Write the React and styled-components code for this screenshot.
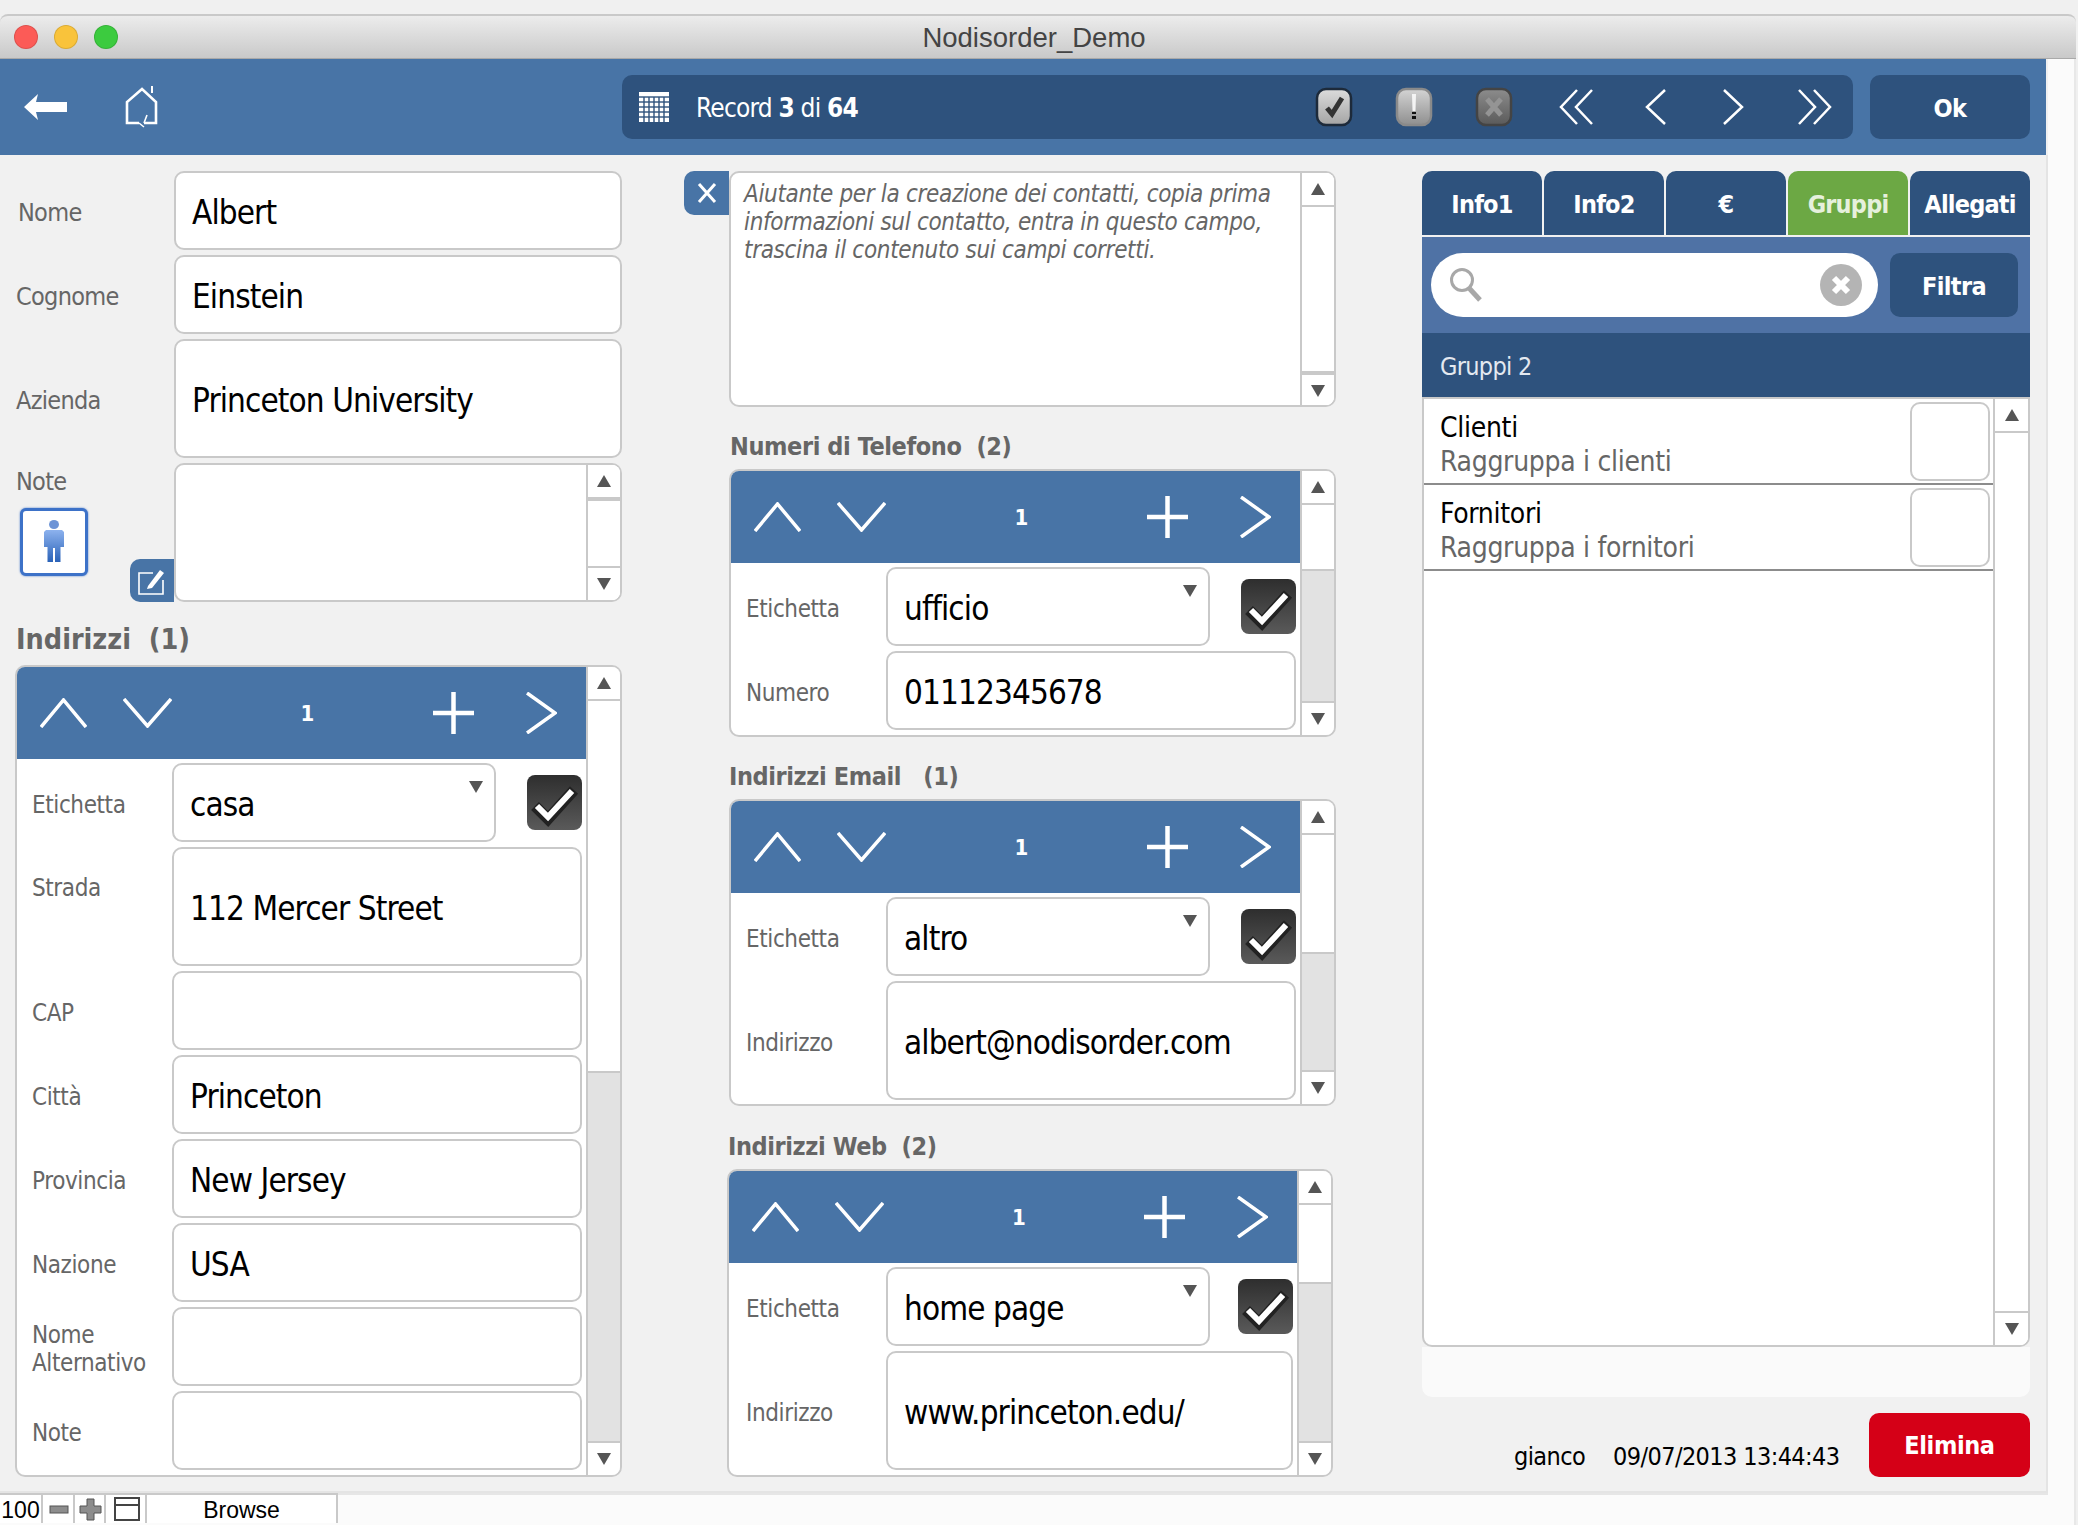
import React from 'react'
import styled, { createGlobalStyle } from 'styled-components'

const uiFont = `"DejaVu Sans Condensed", "DejaVu Sans", sans-serif`

const GlobalStyle = createGlobalStyle`
  html, body { margin: 0; padding: 0; background: #f0f0f0; }
  * { box-sizing: border-box; }
  body { font-family: ${uiFont}; }
`

const Page = styled.div`
  width: 2078px;
  height: 1525px;
  padding-top: 14px;
  overflow: hidden;
  background: #f0f0f0;
`

// ----- window chrome
const TitleBar = styled.header`
  width: 2076px;
  height: 45px;
  display: flex;
  align-items: center;
  justify-content: center;
  position: relative;
  border-top: 2px solid #c9c9c9;
  border-bottom: 1px solid #a9a9a9;
  border-radius: 8px 8px 0 0;
  background: linear-gradient(#ececec, #c9c9c9);
  font: 27.5px "Liberation Sans", sans-serif;
  color: #444;
  padding: 1px 8px 0 0;
`

const Lights = styled.div`
  position: absolute;
  left: 14px;
  top: 9px;
  display: flex;
  gap: 16px;
`

const Light = styled.span`
  width: 24px;
  height: 24px;
  border-radius: 50%;
  background: ${p => p.$color};
  border: 1px solid rgba(0, 0, 0, .12);
`

const WindowBody = styled.div`
  display: flex;
  width: 2076px;
  height: 1466px;
  background: #fbfbfb;
  border-right: 2px solid #e8e8e8;
`

const Content = styled.div`
  width: 2048px;
  flex-shrink: 0;
`

const Toolbar = styled.div`
  height: 96px;
  background: #4874a6;
  border-right: 2px solid #f1f1f1;
  display: flex;
  align-items: flex-start;
  padding: 16px 0 0 24px;
`

const ToolIcons = styled.div`
  width: 598px;
  height: 64px;
  display: flex;
  align-items: center;
  gap: 57px;
  color: #fff;
`

const RecordBar = styled.div`
  width: 1231px;
  height: 64px;
  border-radius: 10px;
  background: #2e527d;
  display: flex;
  align-items: center;
  padding-left: 17px;
  color: #fff;
  font-size: 26px;
  letter-spacing: -0.8px;
  b { font-weight: 700; }
`

const RecordText = styled.div`
  margin-left: 27px;
  padding-top: 2px;
  flex: 1;
`

const NavGroup = styled.div`
  display: flex;
  align-items: center;
`

const NavSlot = styled.span`
  display: flex;
  justify-content: center;
  width: ${p => p.$w}px;
`

const NavSpacer = styled.span`
  width: 3px;
`

const Gloss = styled.svg`
  filter: blur(0.7px);
`

const DarkButton = styled.div`
  border-radius: 10px;
  background: #2e527d;
  color: #fff;
  font-weight: 700;
  display: flex;
  align-items: center;
  justify-content: center;
  font-size: 25px;
  letter-spacing: -0.6px;
  padding-top: 2px;
  width: ${p => p.$w}px;
  height: 64px;
  flex-shrink: 0;
`

const OkButton = styled(DarkButton)`
  margin-left: 17px;
`

const Main = styled.main`
  height: 1338px;
  display: flex;
  background: #f1f1f1;
  border-right: 2px solid #e4e4e4;
  border-bottom: 2px solid #e4e4e4;
  padding: 16px 15px 0 15px;
`

// ----- form parts
const LeftColumn = styled.section`
  width: 607px;
  flex-shrink: 0;
`

const MiddleColumn = styled.section`
  width: 652px;
  margin-left: 62px;
  flex-shrink: 0;
`

const RightColumn = styled.section`
  width: 608px;
  margin-left: 86px;
  flex-shrink: 0;
`

const FieldStack = styled.div`
  display: flex;
  flex-direction: column;
  gap: 5px;
`

const FieldRow = styled.div`
  display: grid;
  grid-template-columns: 159px 1fr;
  align-items: center;
  height: ${p => p.$h}px;
`

const Label = styled.label`
  font-size: 25px;
  line-height: 28px;
  color: #666;
  letter-spacing: -0.7px;
  padding-top: 5px;
  padding-left: ${p => p.$pad || 0}px;
`

const Input = styled.div`
  height: ${p => p.$h || 79}px;
  flex: ${p => p.$w ? 'none' : 1};
  width: ${p => p.$w ? p.$w + 'px' : 'auto'};
  position: relative;
  display: flex;
  align-items: center;
  padding: 3px 0 0 16px;
  background: #fff;
  border: 2px solid #c9c9c9;
  border-radius: 10px;
  color: #000;
  font-size: 33px;
  letter-spacing: -0.9px;
`

const SelectCaret = styled.i`
  position: absolute;
  right: 11px;
  top: 16px;
  border-left: 7px solid transparent;
  border-right: 7px solid transparent;
  border-top: 12px solid #555;
`

const NoteRow = styled.div`
  display: grid;
  grid-template-columns: 159px 1fr;
  height: 139px;
`

const NoteSide = styled.div`
  display: grid;
  grid-template-columns: 115px 44px;
  grid-template-rows: auto 1fr;
`

const NoteLabel = styled(Label)`
  grid-column: 1 / 3;
  padding: 0 0 0 1px;
  margin-top: 5px;
`

const Photo = styled.div`
  width: 68px;
  height: 68px;
  margin: 12px 0 0 5px;
  background: #fff;
  border: 3px solid #3d72c8;
  border-radius: 6px;
  display: flex;
  align-items: center;
  justify-content: center;
  box-shadow: 0 0 2px #3d72c8;
`

const SideButton = styled.div`
  background: #4874a6;
  border-radius: 10px 0 0 10px;
  display: flex;
  align-items: center;
  justify-content: center;
  color: #fff;
`

const EditButton = styled(SideButton)`
  width: 44px;
  height: 43px;
  align-self: end;
`

const CloseButton = styled(SideButton)`
  width: 45px;
  height: 44px;
  flex-shrink: 0;
`

const Box = styled.div`
  display: flex;
  background: #fff;
  border: 2px solid #c9c9c9;
  border-radius: 10px;
  overflow: hidden;
  flex: 1;
  min-width: 0;
`

const BoxBody = styled.div`
  flex: 1;
  min-width: 0;
`

const HelperRow = styled.div`
  display: flex;
  height: 236px;
`

const HelperText = styled.div`
  flex: 1;
  padding: 7px 10px 0 13px;
  font-size: 24px;
  line-height: 28px;
  font-style: italic;
  color: #666;
  letter-spacing: -0.33px;
`

const SectionTitle = styled.h3`
  margin: ${p => p.$top}px 0 0 ${p => p.$left || 0}px;
  height: ${p => p.$h}px;
  font-size: ${p => p.$size || 25}px;
  line-height: 30px;
  font-weight: 700;
  color: #666;
  white-space: pre;
  letter-spacing: ${p => p.$size ? 0 : -0.4}px;
`

const Panel = styled(Box)`
  margin-left: ${p => p.$left || 0}px;
  width: ${p => p.$w}px;
  height: ${p => p.$h}px;
  flex: none;
`

const PanelHead = styled.div`
  height: 92px;
  background: #4874a6;
  color: #fff;
  display: flex;
  align-items: center;
  padding: 0 29px 0 23px;
`

const HeadGap = styled.span`
  width: ${p => p.$w}px;
`

const PanelCount = styled.span`
  flex: 1;
  text-align: center;
  margin-left: 10px;
  font-size: 22px;
  font-weight: 700;
`

const PanelRows = styled.div`
  display: flex;
  flex-direction: column;
  gap: 5px;
  padding: 4px 4px 0 ${p => p.$inset || 0}px;
`

const PanelRow = styled.div`
  display: flex;
  align-items: ${p => p.$top ? 'flex-start' : 'center'};
`

const PanelLabel = styled(Label)`
  width: 155px;
  flex-shrink: 0;
  padding-left: 15px;
  padding-top: ${p => p.$top ? 27 : 4}px;
  font-size: 24px;
  letter-spacing: -0.4px;
`

const CheckSlot = styled.div`
  margin-left: auto;
  width: 55px;
  height: 55px;
`

// ----- scrollbar
const Scroll = styled.div`
  width: ${p => p.$w || 34}px;
  flex-shrink: 0;
  display: flex;
  flex-direction: column;
  background: ${p => p.$open ? '#fff' : '#e2e2e2'};
  border-left: 2px solid #c9c9c9;
`

const ScrollButton = styled.div`
  height: 34px;
  flex-shrink: 0;
  background: #fff;
  display: flex;
  align-items: center;
  justify-content: center;
  border-${p => p.$down ? 'top' : 'bottom'}: 2px solid #c9c9c9;
  &::after {
    content: '';
    border-left: 7px solid transparent;
    border-right: 7px solid transparent;
    border-${p => p.$down ? 'top' : 'bottom'}: 12px solid #555;
  }
`

const ScrollThumb = styled.div`
  flex-shrink: 0;
  background: #fff;
  height: ${p => p.$h}px;
  border-bottom: 2px solid #c9c9c9;
`

const ScrollTrack = styled.div`
  flex: 1;
`

// ----- right column
const Tabs = styled.div`
  display: flex;
  gap: 2px;
  height: 64px;
`

const Tab = styled.div`
  flex: 1;
  border-radius: 10px 10px 0 0;
  background: ${p => p.$active ? '#6ca844' : '#2e527d'};
  color: ${p => p.$active ? '#e6f0dc' : '#fff'};
  display: flex;
  align-items: center;
  justify-content: center;
  padding-top: 2px;
  font-size: 25px;
  font-weight: 700;
  letter-spacing: -0.8px;
`

const SearchBar = styled.div`
  margin-top: 2px;
  height: 96px;
  background: #4f72a5;
  display: flex;
  align-items: center;
  padding: 0 12px 0 9px;
  gap: 12px;
`

const SearchField = styled.div`
  flex: 1;
  height: 64px;
  border-radius: 32px;
  background: #fff;
  display: flex;
  align-items: center;
  justify-content: space-between;
  padding: 0 16px 0 18px;
`

const GroupBar = styled.div`
  height: 64px;
  background: #2e527d;
  color: #e4e9f0;
  display: flex;
  align-items: center;
  padding: 2px 0 0 18px;
  font-size: 25px;
  letter-spacing: -0.7px;
`

const GroupPanel = styled(Box)`
  flex: none;
  height: 950px;
  border-radius: 0 0 10px 10px;
`

const GroupItem = styled.div`
  height: ${p => p.$h}px;
  display: flex;
  justify-content: space-between;
  padding: 3px 3px 0 16px;
  border-bottom: 2px solid #8c8c8c;
`

const GroupText = styled.div`
  font-size: 28px;
  line-height: 34px;
  padding-top: 9px;
  color: #000;
  letter-spacing: -0.3px;
  span { display: block; color: #666; }
`

const GroupCheck = styled.div`
  width: 80px;
  height: 79px;
  background: #fff;
  border: 2px solid #c9c9c9;
  border-radius: 10px;
`

const PortalFoot = styled.div`
  height: 50px;
  background: #fafafa;
  border-radius: 0 0 10px 10px;
`

const FootRow = styled.div`
  margin-top: 16px;
  display: flex;
  align-items: flex-start;
  color: #000;
  font-size: 25px;
  letter-spacing: -0.6px;
`

const Stamp = styled.span`
  margin-left: ${p => p.$left}px;
  padding-top: 29px;
  line-height: 30px;
`

const DeleteButton = styled.div`
  margin-left: auto;
  width: 161px;
  height: 64px;
  border-radius: 10px;
  background: #d50017;
  color: #fff;
  font-weight: 700;
  font-size: 25px;
  letter-spacing: -0.4px;
  padding-top: 1px;
  display: flex;
  align-items: center;
  justify-content: center;
`

// ----- status bar
const StatusBar = styled.footer`
  height: 30px;
  display: flex;
  border-top: 2px solid #e6e6e6;
`

const StatusLeft = styled.div`
  display: flex;
  width: 338px;
  margin-top: -2px;
  background: #fff;
  border-top: 2px solid #c9c9c9;
  border-right: 2px solid #c9c9c9;
`

const StatusCell = styled.div`
  width: ${p => p.$w}px;
  flex: ${p => p.$w ? 'none' : 1};
  display: flex;
  align-items: center;
  justify-content: center;
  border-right: ${p => p.$w ? '2px solid #c9c9c9' : 'none'};
  padding-left: ${p => p.$icon ? 2 : 0}px;
  padding-top: ${p => p.$icon ? 0 : 2}px;
  font: 23px "Liberation Sans", sans-serif;
  color: #000;
`

// ----- drawings
const Stroke = ({ w, h, d, sw = 3.5 }) => (
  <svg width={w} height={h} viewBox={`0 0 ${w} ${h}`} fill="none" stroke="#fff" strokeWidth={sw}>
    <path d={d} />
  </svg>
)

const BackArrow = () => (
  <svg width="43" height="26" viewBox="0 0 43 26" fill="#fff">
    <path d="M0 13 14 0 12 8H43V18H12L14 26z" />
  </svg>
)

const HomeIcon = () => (
  <svg width="36" height="42" viewBox="0 0 36 42" fill="none" stroke="#fff" strokeWidth="2.6">
    <path d="M15 37H3V16L18 3l14 13v21H20" />
    <path d="M15 37l5 4M23 29l-3 8" strokeWidth="1.6" />
    <path d="M28 0v7" strokeWidth="2" />
  </svg>
)

const GridIcon = () => (
  <svg width="30" height="30" viewBox="0 0 30 30">
    <rect width="30" height="30" fill="#fff" />
    {[5, 10, 15, 20, 25].map(p => (
      <React.Fragment key={p}>
        <path d={`M${p} 5V30`} stroke="#2e527d" strokeWidth="1.4" />
        <path d={`M0 ${p}H30`} stroke="#2e527d" strokeWidth="1.4" />
      </React.Fragment>
    ))}
  </svg>
)

const GlossIcon = ({ id, top, bottom, line, mark }) => (
  <Gloss width="38" height="40" viewBox="0 0 38 40">
    <defs>
      <linearGradient id={id} x1="0" y1="0" x2="0" y2="1">
        <stop offset="0" stopColor={top} />
        <stop offset="1" stopColor={bottom} />
      </linearGradient>
    </defs>
    <rect x="2" y="2" width="34" height="36" rx="9" fill={`url(#${id})`} stroke={line} strokeWidth="2.5" />
    {mark}
  </Gloss>
)

const DarkCheck = () => (
  <svg width="55" height="55" viewBox="0 0 55 55">
    <defs>
      <linearGradient id="darkCheck" x1="0" y1="0" x2="0" y2="1">
        <stop offset="0" stopColor="#2e2e2e" />
        <stop offset="1" stopColor="#5a5a5a" />
      </linearGradient>
    </defs>
    <rect width="55" height="55" rx="8" fill="url(#darkCheck)" />
    <path d="M8 31 21 44 47 15" fill="none" stroke="#222" strokeWidth="11" />
    <path d="M10 31 21 42 45 16" fill="none" stroke="#fff" strokeWidth="6" />
  </svg>
)

const PersonIcon = () => (
  <Gloss width="20" height="44" viewBox="0 0 20 44">
    <defs>
      <linearGradient id="person" x1="0" y1="0" x2="0" y2="1">
        <stop offset="0" stopColor="#8db2ee" />
        <stop offset="1" stopColor="#2a62b8" />
      </linearGradient>
    </defs>
    <ellipse cx="10" cy="4.500" rx="5" ry="4.500" fill="#6d94d6" />
    <path d="M2 10h16l2 2v15h-3.500v15h-5.500V28H9v14H3.500V27H0V12z" fill="url(#person)" />
  </Gloss>
)

const EditIcon = () => (
  <svg width="28" height="28" viewBox="0 0 28 28" fill="none" stroke="#fff" strokeWidth="1.6">
    <path d="M15 6H1v21h24V13" />
    <path d="M10 19 22 3l4 3-12 15-5 1z" fill="#fff" stroke="none" />
  </svg>
)

const SearchIcon = () => (
  <svg width="34" height="36" viewBox="0 0 34 36" fill="none" stroke="#a8a8a8">
    <circle cx="13" cy="13" r="10.500" strokeWidth="3" />
    <path d="M20 21 31 33" strokeWidth="5" />
  </svg>
)

const ClearIcon = () => (
  <svg width="42" height="42" viewBox="0 0 42 42">
    <circle cx="21" cy="21" r="21" fill="#b4b4b4" />
    <path d="M14 14 28 28M28 14 14 28" stroke="#fff" strokeWidth="6" />
  </svg>
)

const MiniIcon = ({ children }) => (
  <svg width="24" height="24" viewBox="0 0 24 24">{children}</svg>
)

const GREY_MARK = { fill: '#8d8d8d', stroke: '#555', strokeWidth: 1 }

const ScrollBar = ({ thumb, w, open, plain }) => (
  <Scroll $w={w} $open={open}>
    <ScrollButton />
    {plain ? <ScrollThumb $h={plain} /> : null}
    {thumb ? <ScrollThumb $h={thumb} /> : null}
    <ScrollTrack />
    <ScrollButton $down />
  </Scroll>
)

const Portal = ({ height, left, thumb, rows, width = 607, inset }) => (
  <Panel $w={width} $h={height} $left={left}>
    <BoxBody>
      <PanelHead>
        <Stroke w={47} h={30} d="M1 29 23.500 2 46 29" />
        <HeadGap $w={36} />
        <Stroke w={49} h={30} d="M1 1 24.500 28 48 1" />
        <PanelCount>1</PanelCount>
        <Stroke w={41} h={42} d="M20.500 0V42M0 21H41" sw={4.5} />
        <HeadGap $w={52} />
        <Stroke w={31} h={42} d="M1 1 29 21 1 41" />
      </PanelHead>
      <PanelRows $inset={inset}>
        {rows.map(row => (
          <PanelRow key={row.id || row.label} $top={row.top}>
            <PanelLabel $top={row.top}>{row.label}</PanelLabel>
            {row.select ? (
              <>
                <Input $h={79} $w={324}>{row.value}<SelectCaret /></Input>
                <CheckSlot><DarkCheck /></CheckSlot>
              </>
            ) : (
              <Input $h={row.h}>{row.value}</Input>
            )}
          </PanelRow>
        ))}
      </PanelRows>
    </BoxBody>
    <ScrollBar thumb={thumb} />
  </Panel>
)

const addressRows = [
  { label: 'Etichetta', value: 'casa', select: true },
  { label: 'Strada', value: '112 Mercer Street', h: 119, top: true },
  { label: 'CAP', value: '' },
  { label: 'Città', value: 'Princeton' },
  { label: 'Provincia', value: 'New Jersey' },
  { label: 'Nazione', value: 'USA' },
  { id: 'alt', label: <>Nome<br />Alternativo</>, value: '' },
  { label: 'Note', value: '' },
]

const phoneRows = [
  { label: 'Etichetta', value: 'ufficio', select: true },
  { label: 'Numero', value: '01112345678' },
]

const emailRows = [
  { label: 'Etichetta', value: 'altro', select: true },
  { label: 'Indirizzo', value: 'albert@nodisorder.com', h: 119 },
]

const webRows = [
  { label: 'Etichetta', value: 'home page', select: true },
  { label: 'Indirizzo', value: 'www.princeton.edu/', h: 119 },
]

const tabs = ['Info1', 'Info2', '€', 'Gruppi', 'Allegati']

const groups = [
  { name: 'Clienti', info: 'Raggruppa i clienti', h: 86 },
  { name: 'Fornitori', info: 'Raggruppa i fornitori', h: 86 },
]

const App = () => (
  <Page>
    <GlobalStyle />
    <TitleBar>
      <Lights>
        <Light $color="#fc5b57" />
        <Light $color="#f9c33b" />
        <Light $color="#3ccb3f" />
      </Lights>
      Nodisorder_Demo
    </TitleBar>
    <WindowBody>
      <Content>
        <Toolbar>
          <ToolIcons>
            <BackArrow />
            <HomeIcon />
          </ToolIcons>
          <RecordBar>
            <GridIcon />
            <RecordText>Record <b>3</b> di <b>64</b></RecordText>
            <NavGroup>
              <NavSlot $w={80}>
                <GlossIcon id="g1" top="#dcdcdc" bottom="#a4a4a4" line="#1d2a3a"
                  mark={<path d="M12 21 17 27 27 11" fill="none" stroke="#333" strokeWidth="5" />} />
              </NavSlot>
              <NavSlot $w={80}>
                <GlossIcon id="g2" top="#d4d4d4" bottom="#8f8f8f" line="#8a8a8a"
                  mark={<><path d="M17 7h4l-.5 17h-3z" fill="#f4f4f4" /><path d="M17 25h4v2h-4zM17 29h4v3h-4z" fill="#111" /></>} />
              </NavSlot>
              <NavSlot $w={80}>
                <GlossIcon id="g3" top="#8c8c8c" bottom="#5a5a5a" line="#444"
                  mark={<path d="M12 12 26 28M26 12 12 28" stroke="#949494" strokeWidth="5" />} />
              </NavSlot>
              <NavSlot $w={86}><Stroke w={36} h={36} d="M18 1 2 18 18 35M33 1 17 18 33 35" sw={2.5} /></NavSlot>
              <NavSlot $w={70}><Stroke w={24} h={36} d="M22 1 4 18 22 35" sw={2.5} /></NavSlot>
              <NavSlot $w={88}><Stroke w={24} h={36} d="M2 1 20 18 2 35" sw={2.5} /></NavSlot>
              <NavSlot $w={72}><Stroke w={36} h={36} d="M3 1 19 18 3 35M18 1 34 18 18 35" sw={2.5} /></NavSlot>
              <NavSpacer />
            </NavGroup>
          </RecordBar>
          <OkButton $w={160}>Ok</OkButton>
        </Toolbar>
        <Main>
          <LeftColumn>
            <FieldStack>
              <FieldRow $h={79}><Label $pad={3}>Nome</Label><Input>Albert</Input></FieldRow>
              <FieldRow $h={79}><Label $pad={1}>Cognome</Label><Input>Einstein</Input></FieldRow>
              <FieldRow $h={119}><Label $pad={1}>Azienda</Label><Input $h={119}>Princeton University</Input></FieldRow>
              <NoteRow>
                <NoteSide>
                  <NoteLabel>Note</NoteLabel>
                  <Photo><PersonIcon /></Photo>
                  <EditButton><EditIcon /></EditButton>
                </NoteSide>
                <Box>
                  <BoxBody />
                  <ScrollBar open plain={1} />
                </Box>
              </NoteRow>
            </FieldStack>
            <SectionTitle $top={23} $h={40} $size={28.5} $left={1}>Indirizzi  (1)</SectionTitle>
            <Portal height={812} thumb={372} rows={addressRows} />
          </LeftColumn>
          <MiddleColumn>
            <HelperRow>
              <CloseButton><Stroke w={20} h={22} d="M2 2 18 20M18 2 2 20" sw={3} /></CloseButton>
              <Box>
                <HelperText>
                  Aiutante per la creazione dei contatti, copia prima informazioni sul contatto, entra in questo campo, trascina il contenuto sui campi corretti.
                </HelperText>
                <ScrollBar open plain={166} />
              </Box>
            </HelperRow>
            <SectionTitle $top={25} $h={37} $left={46}>Numeri di Telefono  (2)</SectionTitle>
            <Portal height={268} left={45} thumb={66} rows={phoneRows} />
            <SectionTitle $top={25} $h={37} $left={45}>Indirizzi Email   (1)</SectionTitle>
            <Portal height={307} left={45} thumb={119} rows={emailRows} />
            <SectionTitle $top={26} $h={37} $left={44}>Indirizzi Web  (2)</SectionTitle>
            <Portal height={308} width={606} left={43} thumb={79} rows={webRows} inset={2} />
          </MiddleColumn>
          <RightColumn>
            <Tabs>
              {tabs.map(tab => <Tab key={tab} $active={tab === 'Gruppi'}>{tab}</Tab>)}
            </Tabs>
            <SearchBar>
              <SearchField>
                <SearchIcon />
                <ClearIcon />
              </SearchField>
              <DarkButton $w={128}>Filtra</DarkButton>
            </SearchBar>
            <GroupBar>Gruppi 2</GroupBar>
            <GroupPanel>
              <BoxBody>
                {groups.map(g => (
                  <GroupItem key={g.name} $h={g.h}>
                    <GroupText>{g.name}<span>{g.info}</span></GroupText>
                    <GroupCheck />
                  </GroupItem>
                ))}
              </BoxBody>
              <ScrollBar w={35} open />
            </GroupPanel>
            <PortalFoot />
            <FootRow>
              <Stamp $left={92}>gianco</Stamp>
              <Stamp $left={28}>09/07/2013 13:44:43</Stamp>
              <DeleteButton>Elimina</DeleteButton>
            </FootRow>
          </RightColumn>
        </Main>
        <StatusBar>
          <StatusLeft>
            <StatusCell $w={43}>100</StatusCell>
            <StatusCell $w={32} $icon>
              <MiniIcon><rect x="3" y="9" width="18" height="7" {...GREY_MARK} /></MiniIcon>
            </StatusCell>
            <StatusCell $w={31} $icon>
              <MiniIcon><path d="M8 2h7v7h7v7h-7v7H8v-7H1V9h7z" {...GREY_MARK} /></MiniIcon>
            </StatusCell>
            <StatusCell $w={41} $icon>
              <svg width="26" height="24" viewBox="0 0 26 24" fill="none" stroke="#444" strokeWidth="2">
                <rect x="1" y="1" width="24" height="22" />
                <path d="M1 8H25" />
              </svg>
            </StatusCell>
            <StatusCell>Browse</StatusCell>
          </StatusLeft>
        </StatusBar>
      </Content>
    </WindowBody>
  </Page>
)

export default App
